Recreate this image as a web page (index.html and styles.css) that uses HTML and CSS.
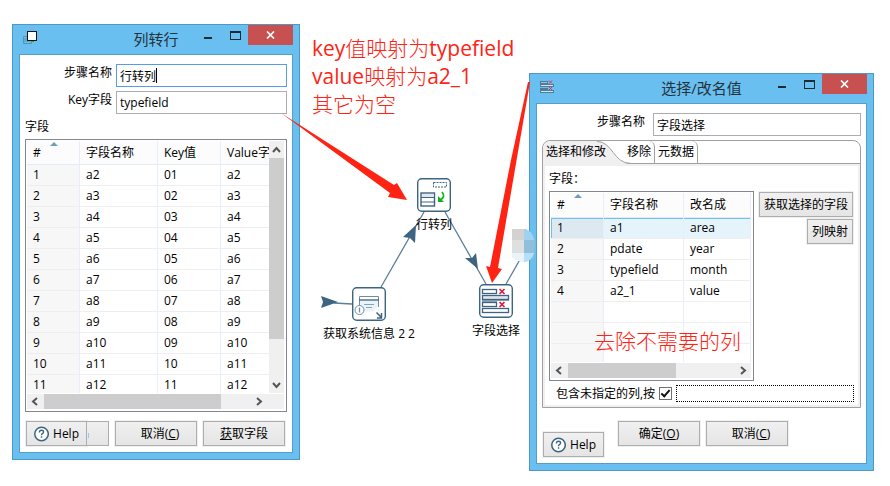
FILE: index.html
```html
<!DOCTYPE html>
<html lang="zh-CN">
<head>
<meta charset="utf-8">
<title>列转行</title>
<link rel="stylesheet" href="styles.css">
</head>
<body>
<main class="desktop">
  <svg class="hops" width="890" height="486" aria-hidden="true">
    <g stroke="#5d7f99" stroke-width="1.3" fill="none">
      <path d="M334 303L352 304M381 287L424 212M445 212L486 284M506 284L530 242"/>
    </g>
    <g fill="#3d6480">
      <path d="M338 302L321 296L323 302L321 308Z"/>
      <path d="M416 225L403 237L410 238L415 243Z"/>
      <path d="M478 269L465 258L472 258L476 253Z"/>
    </g>
  </svg>

  <figure class="node node-pivot">
    <svg width="34" height="34" viewBox="0 0 34 34" aria-hidden="true">
      <rect x=".7" y=".7" width="32.600" height="32.600" rx="4" fill="#fff" stroke="#3d6480" stroke-width="1.4"/>
      <rect x="16.500" y="4.500" width="13" height="4.500" fill="none" stroke="#3d6480" stroke-dasharray="2 1"/>
      <rect x="4" y="15" width="13.500" height="13" fill="#fff" stroke="#3d6480" stroke-width="1.400"/>
      <path d="M5 16h11.500v3H5z" fill="#dfe7ec"/><path d="M4 19.500h13M4 24h13" stroke="#3d6480"/>
      <path d="M25 14q4 5-2 8" fill="none" stroke="#12b31a" stroke-width="1.800"/><path d="M21 18v6h6z" fill="#12b31a"/>
    </svg>
    <figcaption>行转列</figcaption>
  </figure>
  <figure class="node node-system">
    <svg width="34" height="34" viewBox="0 0 34 34" aria-hidden="true">
      <rect x=".7" y=".7" width="32.600" height="32.600" rx="4" fill="#fff" stroke="#3d6480" stroke-width="1.4"/>
      <path d="M7.500 9.500h19v9l-6 6h-13z" fill="#e8f4fa"/>
      <path d="M7.500 20V9.500h19V20" fill="none" stroke="#6f8da2"/>
      <path d="M8 10h18v2.500H8z" fill="#fff"/><path d="M7 13h20" stroke="#3d6480" stroke-width="1.300"/>
      <path d="M12 17.500h10M14 20.500h6" stroke="#8ba3b4"/>
      <circle cx="7.500" cy="23" r="4.500" fill="#fff" stroke="#6f8da2"/><path d="M7.500 20.500v5" stroke="#6f8da2" stroke-width="1.300"/>
      <path d="M24.500 25.500l5 5M29.500 26v5H25" fill="none" stroke="#3d6480" stroke-width="1.500"/>
    </svg>
    <figcaption>获取系统信息 2 2</figcaption>
  </figure>
  <figure class="node node-select">
    <svg width="34" height="34" viewBox="0 0 34 34" aria-hidden="true">
      <rect x=".7" y=".7" width="32.600" height="32.600" rx="4" fill="#fff" stroke="#3d6480" stroke-width="1.4"/>
      <path d="M3 15h27v2H18v2H3z" fill="#8fa5b5"/>
      <g fill="#fff" stroke="#3d6480" stroke-width="1.300"><rect x="3.500" y="5.500" width="14" height="4"/><rect x="3.500" y="11.500" width="26" height="4" fill="#dfe7ec"/><rect x="3.500" y="18.500" width="14" height="4"/><rect x="3.500" y="24.500" width="26" height="4"/></g>
      <path d="M20.500 5l5 5m0-5l-5 5M20.500 18l5 5m0-5l-5 5" stroke="#e11a3c" stroke-width="1.700"/>
    </svg>
    <figcaption>字段选择</figcaption>
  </figure>

  <section class="window window-pivot">
    <header class="titlebar">
      <svg class="app-icon" width="15" height="15" viewBox="0 0 15 15" aria-hidden="true">
        <path d="M.5 6.500h8v7h-8zM.5 9h8M.5 11h8" fill="none" stroke="#5294b5"/><path d="M9 9h2v3H9z" fill="#12b31a"/><rect x="4.500" y="1.500" width="9" height="9" fill="#fff" stroke="#111"/>
      </svg>
      <h1>列转行</h1>
      <div class="controls">
        <button type="button" class="minimize" aria-label="最小化"></button>
        <button type="button" class="maximize" aria-label="最大化"></button>
        <button type="button" class="close" aria-label="关闭"><svg width="9" height="8" viewBox="0 0 9 8"><path d="M1 .5l7 7M8 .5l-7 7" stroke="#fff" stroke-width="1.700"/></svg></button>
      </div>
    </header>
    <form class="client">
      <div class="field"><label for="p-name">步骤名称</label><div class="edit"><input id="p-name" class="focused" type="text" value="行转列"><i class="caret"></i></div></div>
      <div class="field"><label for="p-key">Key字段</label><div class="edit"><input id="p-key" type="text" value="typefield"></div></div>
      <h2 class="caption">字段</h2>
      <div class="grid grid-both">
        <div class="viewport">
          <table>
            <colgroup><col class="c-num"><col class="c-name"><col class="c-key"><col></colgroup>
            <thead><tr><th class="sorted">#</th><th>字段名称</th><th>Key值</th><th>Value字</th></tr></thead>
            <tbody>
              <tr><td>1</td><td>a2</td><td>01</td><td>a2</td></tr>
              <tr><td>2</td><td>a3</td><td>02</td><td>a3</td></tr>
              <tr><td>3</td><td>a4</td><td>03</td><td>a4</td></tr>
              <tr><td>4</td><td>a5</td><td>04</td><td>a5</td></tr>
              <tr><td>5</td><td>a6</td><td>05</td><td>a6</td></tr>
              <tr><td>6</td><td>a7</td><td>06</td><td>a7</td></tr>
              <tr><td>7</td><td>a8</td><td>07</td><td>a8</td></tr>
              <tr><td>8</td><td>a9</td><td>08</td><td>a9</td></tr>
              <tr><td>9</td><td>a10</td><td>09</td><td>a10</td></tr>
              <tr><td>10</td><td>a11</td><td>10</td><td>a11</td></tr>
              <tr><td>11</td><td>a12</td><td>11</td><td>a12</td></tr>
            </tbody>
          </table>
        </div>
        <div class="vbar"><svg width="15" height="17"><path d="M4 11l3.500-4 3.500 4" /></svg><span class="thumb"></span><svg class="end" width="15" height="17"><path d="M4 7l3.500 4L11 7"/></svg></div>
        <div class="hbar"><svg width="17" height="15"><path d="M10 4L6 7.500l4 3.500"/></svg><span class="thumb"></span><svg class="end" width="17" height="15"><path d="M7 4l4 3.500L7 11"/></svg></div>
      </div>
      <footer class="actions">
        <div class="joined">
          <button type="button" class="button help"><svg width="16" height="16" viewBox="0 0 16 16" aria-hidden="true"><circle cx="8" cy="8" r="7.200" fill="#fff" stroke="#3d6480" stroke-width="1.600"/><path d="M5.800 6.300q0-2.300 2.200-2.300t2.200 1.900q0 1.100-1.300 1.700-.9.500-.9 1.600M8 10.500v1.600" fill="none" stroke="#3d6480" stroke-width="1.500"/></svg>Help</button>
          <button type="button" class="button stub" aria-label="确定"></button>
        </div>
        <button type="button" class="button wide shifted">取消(<u>C</u>)</button>
        <button type="button" class="button wide"><u>获</u>取字段</button>
      </footer>
    </form>
  </section>

  <section class="window window-select">
    <header class="titlebar">
      <svg class="app-icon" width="15" height="15" viewBox="0 0 15 15" aria-hidden="true">
        <g fill="#9fc3da" stroke="#4f7c99"><rect x=".5" y="2.500" width="7" height="2"/><rect x=".5" y="5.500" width="13" height="2" fill="#d5e3ec"/><rect x=".5" y="9.500" width="7" height="1"/><rect x=".5" y="11.500" width="13" height="2" fill="#d5e3ec"/></g><path d="M9 1.500l3 3m0-3l-3 3M9 8l3 3m0-3l-3 3" stroke="#d9365c"/>
      </svg>
      <h1>选择/改名值</h1>
      <div class="controls">
        <button type="button" class="minimize" aria-label="最小化"></button>
        <button type="button" class="maximize" aria-label="最大化"></button>
        <button type="button" class="close" aria-label="关闭"><svg width="9" height="8" viewBox="0 0 9 8"><path d="M1 .5l7 7M8 .5l-7 7" stroke="#fff" stroke-width="1.700"/></svg></button>
      </div>
    </header>
    <form class="client">
      <div class="field"><label for="s-name">步骤名称</label><div class="edit"><input id="s-name" type="text" value="字段选择"></div></div>
      <div class="tabs">
        <div class="tablist" role="tablist">
          <button type="button" role="tab" aria-selected="true" class="tab current"><svg width="90" height="24" aria-hidden="true"><path d="M0 24V8Q0 0 8 0H54C70 0 70 23 88 23V24Z" fill="#f0f0f0"/><path d="M54 .5C70 .5 70 22.500 88 22.500" fill="none" stroke="#a0a0a0"/></svg><span>选择和修改</span></button>
          <button type="button" role="tab" aria-selected="false" class="tab">移除</button>
          <button type="button" role="tab" aria-selected="false" class="tab">元数据</button>
        </div>
        <div class="panel">
          <h2 class="caption">字段<span class="colon">：</span></h2>
          <div class="split">
            <div class="grid grid-h">
              <div class="viewport">
                <table>
                  <colgroup><col class="c-num"><col class="c-name"><col></colgroup>
                  <thead><tr><th class="sorted">#</th><th>字段名称</th><th>改名成</th></tr></thead>
                  <tbody>
                    <tr class="selected"><td>1</td><td>a1</td><td>area</td></tr>
                    <tr><td>2</td><td>pdate</td><td>year</td></tr>
                    <tr><td>3</td><td>typefield</td><td>month</td></tr>
                    <tr><td>4</td><td>a2_1</td><td>value</td></tr>
                    <tr><td></td><td></td><td></td></tr>
                    <tr><td></td><td></td><td></td></tr>
                    <tr><td></td><td></td><td></td></tr>
                  </tbody>
                </table>
              </div>
              <div class="hbar"><svg width="17" height="15"><path d="M10 4L6 7.500l4 3.500"/></svg><span class="thumb"></span><svg class="end" width="17" height="15"><path d="M7 4l4 3.500L7 11"/></svg></div>
            </div>
            <div class="side">
              <button type="button" class="button">获取选择的字段</button>
              <button type="button" class="button">列映射</button>
            </div>
          </div>
          <div class="include">
            <label for="s-rest">包含未指定的列,按</label>
            <input id="s-rest" type="checkbox" checked>
            <span class="focus-box"></span>
          </div>
        </div>
      </div>
      <footer class="actions">
        <button type="button" class="button help"><svg width="16" height="16" viewBox="0 0 16 16" aria-hidden="true"><circle cx="8" cy="8" r="7.200" fill="#fff" stroke="#3d6480" stroke-width="1.600"/><path d="M5.800 6.300q0-2.300 2.200-2.300t2.200 1.900q0 1.100-1.300 1.700-.9.500-.9 1.600M8 10.500v1.600" fill="none" stroke="#3d6480" stroke-width="1.500"/></svg>Help</button>
        <button type="button" class="button wide">确定(<u>O</u>)</button>
        <button type="button" class="button wide shifted">取消(<u>C</u>)</button>
      </footer>
    </form>
  </section>

  <svg class="marks" width="890" height="486" aria-hidden="true">
    <g fill="#ff2314">
      <path d="M281 113L394 185L397 183L407 200L388 197L390 193Z"/>
      <path d="M530 82L498 268L502 269L492 283L486 266L490 267L511 160L528 82Z"/>
    </g>
    <clipPath id="spot"><path d="M512 229H526Q535 233 535 246T526 262Q516 262 512 257Z"/></clipPath>
    <g clip-path="url(#spot)">
      <path d="M512 228h12v12h-12z" fill="#d2d2d2"/><path d="M512 240h12v13h-12z" fill="#dedfe1"/><path d="M512 253h12v10h-12z" fill="#ebf3f9"/>
      <path d="M524 228h12v12h-12z" fill="#9fd2f1"/><path d="M524 240h12v13h-12z" fill="#8fbfda"/><path d="M524 253h12v10h-12z" fill="#b5def7"/>
    </g>
  </svg>
  <p class="note note-top"><span>key</span>值映射为<span>typefield</span><br><span>value</span>映射为<span>a2_1</span><br>其它为空</p>
  <p class="note note-drop">去除不需要的列</p>
</main>
</body>
</html>
```
FILE: styles.css
```css
*, ::before, ::after { box-sizing: border-box; }

body {
  margin: 0;
  background: #fff;
  color: #000;
  font: 12px/16px "Open Sans", "Noto Sans CJK SC", sans-serif;
}

button, input { font: inherit; color: inherit; margin: 0; }
h1, h2, p, figure { margin: 0; font-weight: 400; }

.desktop { position: relative; min-height: 100vh; overflow: hidden; }

.hops, .marks { position: absolute; left: 0; top: 0; pointer-events: none; }

/* Canvas steps */
.node {
  position: absolute;
  display: flex;
  flex-direction: column;
  align-items: center;
  gap: 5px;
  width: 100px;
  white-space: nowrap;
}
.node svg { display: block; }
.node-pivot { left: 384px; top: 178px; }
.node-system { left: 319px; top: 287px; }
.node-select { left: 446px; top: 284px; }

/* Windows */
.window {
  position: absolute;
  background: #69bff0;
  border: 1px solid #4f98bf;
  padding: 0 6px 6px;
}
.window-pivot { left: 12px; top: 24px; width: 288px; }
.window-select { left: 529px; top: 73px; width: 345px; }

.titlebar {
  display: grid;
  grid-template-columns: 90px 1fr 90px;
  height: 29px;
}
.app-icon { margin: 5px 0 0 4px; }
.titlebar h1 {
  font-size: 15px;
  line-height: 28px;
  text-align: center;
  color: #24323c;
  white-space: nowrap;
}
.controls { display: flex; justify-content: flex-end; align-items: flex-start; }
.controls button { border: 0; padding: 0; background: none; height: 20px; }
.controls .minimize, .controls .maximize { display: flex; flex: none; }
.controls .minimize { width: 26px; padding-top: 12px; }
.controls .maximize { width: 18px; padding-top: 6px; }
.minimize::before { content: ""; width: 8px; height: 2px; background: #1d2a33; }
.maximize::before { content: ""; width: 11px; height: 9px; border: 1px solid #1d2a33; border-top-width: 2px; }
.controls .close {
  display: flex;
  flex: none;
  align-items: center;
  justify-content: center;
  width: 45px;
  background: #c75050;
}

.client {
  background: #fff;
  border: 1px solid #559fc6;
  padding: 9px 5px 6px;
}

.field { display: grid; grid-template-columns: 87px 1fr; column-gap: 4px; margin-bottom: 4px; }
.field label { text-align: right; padding-top: 1px; }
.window-select .field { grid-template-columns: 103px 1fr; column-gap: 8px; }
.edit { position: relative; display: flex; }
.edit input {
  width: 100%;
  height: 23px;
  padding: 0 3px;
  background: #fff;
  border: 1px solid #abadb3;
  border-radius: 0;
  outline: 0;
}
.edit .focused { border-color: #569de5; }
.caret { position: absolute; left: 40px; top: 4px; width: 1px; height: 15px; background: #000; }

.caption { font-size: 12px; line-height: 16px; }
.window-pivot .caption { margin: 5px 0 4px; }
.colon { font-family: "Noto Sans CJK TC", sans-serif; line-height: 1; }

/* Tables */
.grid { border: 1px solid #828790; background: #fff; padding: 1px 2px 2px 1px; display: grid; }
.grid-both { grid-template-columns: 1fr 15px; }
.viewport { overflow: hidden; min-width: 0; }
.grid-both .viewport { height: 252px; }
.grid-h .viewport { height: 169px; }
table { width: 100%; border-collapse: separate; border-spacing: 0; table-layout: fixed; }
.c-num { width: 53px; }
.c-name { width: 78px; }
.c-key { width: 63px; }
.window-select .c-name { width: 80px; }
th, td {
  height: 21px;
  padding: 0 0 0 6px;
  border-right: 1px solid #e6eef9;
  border-bottom: 1px solid #eeeef0;
  text-align: left;
  font-weight: 400;
  line-height: 16px;
  white-space: nowrap;
  overflow: hidden;
}
.grid-both td:last-child, .grid-both th:last-child { border-right: 0; }
th { position: relative; height: 24px; background: #fcfcfc; border-bottom-color: #e2ecf8; }
.grid-h th { height: 25px; }
td:first-child { background: #f7f7f7; }
.sorted::after {
  content: "";
  position: absolute;
  left: 23px;
  top: 1px;
  border: 4px solid transparent;
  border-top: 0;
  border-bottom-color: #6c9fb9;
}
.selected td { background: #e5f3fb; box-shadow: inset 0 1px #70c0e7; }
.selected td:first-child { background: #dde9f0; box-shadow: inset 1px 1px #70c0e7; }

.vbar, .hbar { display: flex; background: #f0f0f0; }
.vbar { flex-direction: column; }
.hbar { grid-column: 1 / -1; height: 16px; border-top: 1px solid #fff; }
.vbar svg, .hbar svg { display: block; flex: none; fill: none; stroke: #555; stroke-width: 2; }
.vbar .end { margin-top: auto; }
.grid-both .hbar .end { margin-left: auto; margin-right: 17px; }
.grid-h .hbar .end { margin-left: auto; }
.thumb { background: #cdcdcd; }
.vbar .thumb { height: 72%; }
.hbar .thumb { width: 69%; }
.grid-h .thumb { width: 54%; }

/* Buttons */
.button {
  height: 25px;
  padding: 0 4px;
  border: 1px solid #adadad;
  border-radius: 0;
  background: linear-gradient(#f0f0f0, #e5e5e5);
  outline: 1px solid #f0f0f0;
  white-space: nowrap;
  line-height: 16px;
}
.help { display: flex; flex: none; align-items: center; gap: 4px; width: 61px; padding: 0 7px; }
.wide { width: 82px; }
.shifted { padding-left: 12px; }
.actions { display: flex; gap: 6px; }
.window-pivot .actions { margin: 9px 0 0 1px; }
.joined { display: flex; }
.stub { position: relative; width: 22px; border-left: 0; outline: 0; }
.stub::before { content: ""; position: absolute; left: 1px; top: 11px; width: 1px; height: 5px; background: #7fd4ee; }
.window-select .actions { margin: 13px 0 0 1px; align-items: flex-start; }
.window-select .help { margin: 11px 8px 0 0; }

/* Tab folder */
.tabs { border: 1px solid #a0a0a0; border-radius: 8px 8px 0 0; overflow: hidden; }
.tablist { display: flex; height: 23px; border-bottom: 1px solid #a0a0a0; }
.tab {
  position: relative;
  height: 22px;
  padding: 0 3px;
  border: 0;
  border-right: 1px solid #a0a0a0;
  border-top-right-radius: 6px;
  background: none;
  line-height: 16px;
  white-space: nowrap;
}
.current { width: 81px; border: 0; text-align: left; }
.current svg { position: absolute; left: 0; top: 0; }
.current span { position: relative; }
.panel { border: 2px solid #f0f0f0; padding: 5px 4px 3px; }
.split { display: grid; grid-template-columns: 205px 1fr; column-gap: 5px; margin-top: 4px; }
.side { display: flex; flex-direction: column; align-items: flex-end; gap: 2px; padding: 1px 1px 0 0; }
.include { display: flex; align-items: center; gap: 4px; padding-left: 7px; margin-top: 4px; height: 17px; }
.include input {
  appearance: none;
  width: 13px;
  height: 13px;
  border: 1px solid #707070;
  background: #fff;
  display: grid;
  place-items: center;
}
.include input:checked::before {
  content: "";
  width: 9px;
  height: 5px;
  margin-bottom: 3px;
  border: solid #111;
  border-width: 0 0 2px 2px;
  transform: rotate(-48deg);
}
.focus-box { flex: 1; height: 17px; border: 1px dotted #000; }

/* Red annotations */
.note { position: absolute; color: #ff2314; font-size: 21px; line-height: 28px; white-space: nowrap; font-weight: 300; }
.note span { font-weight: 400; }
.note-top { left: 312px; top: 34px; }
.note-drop { left: 594px; top: 327px; }
```
